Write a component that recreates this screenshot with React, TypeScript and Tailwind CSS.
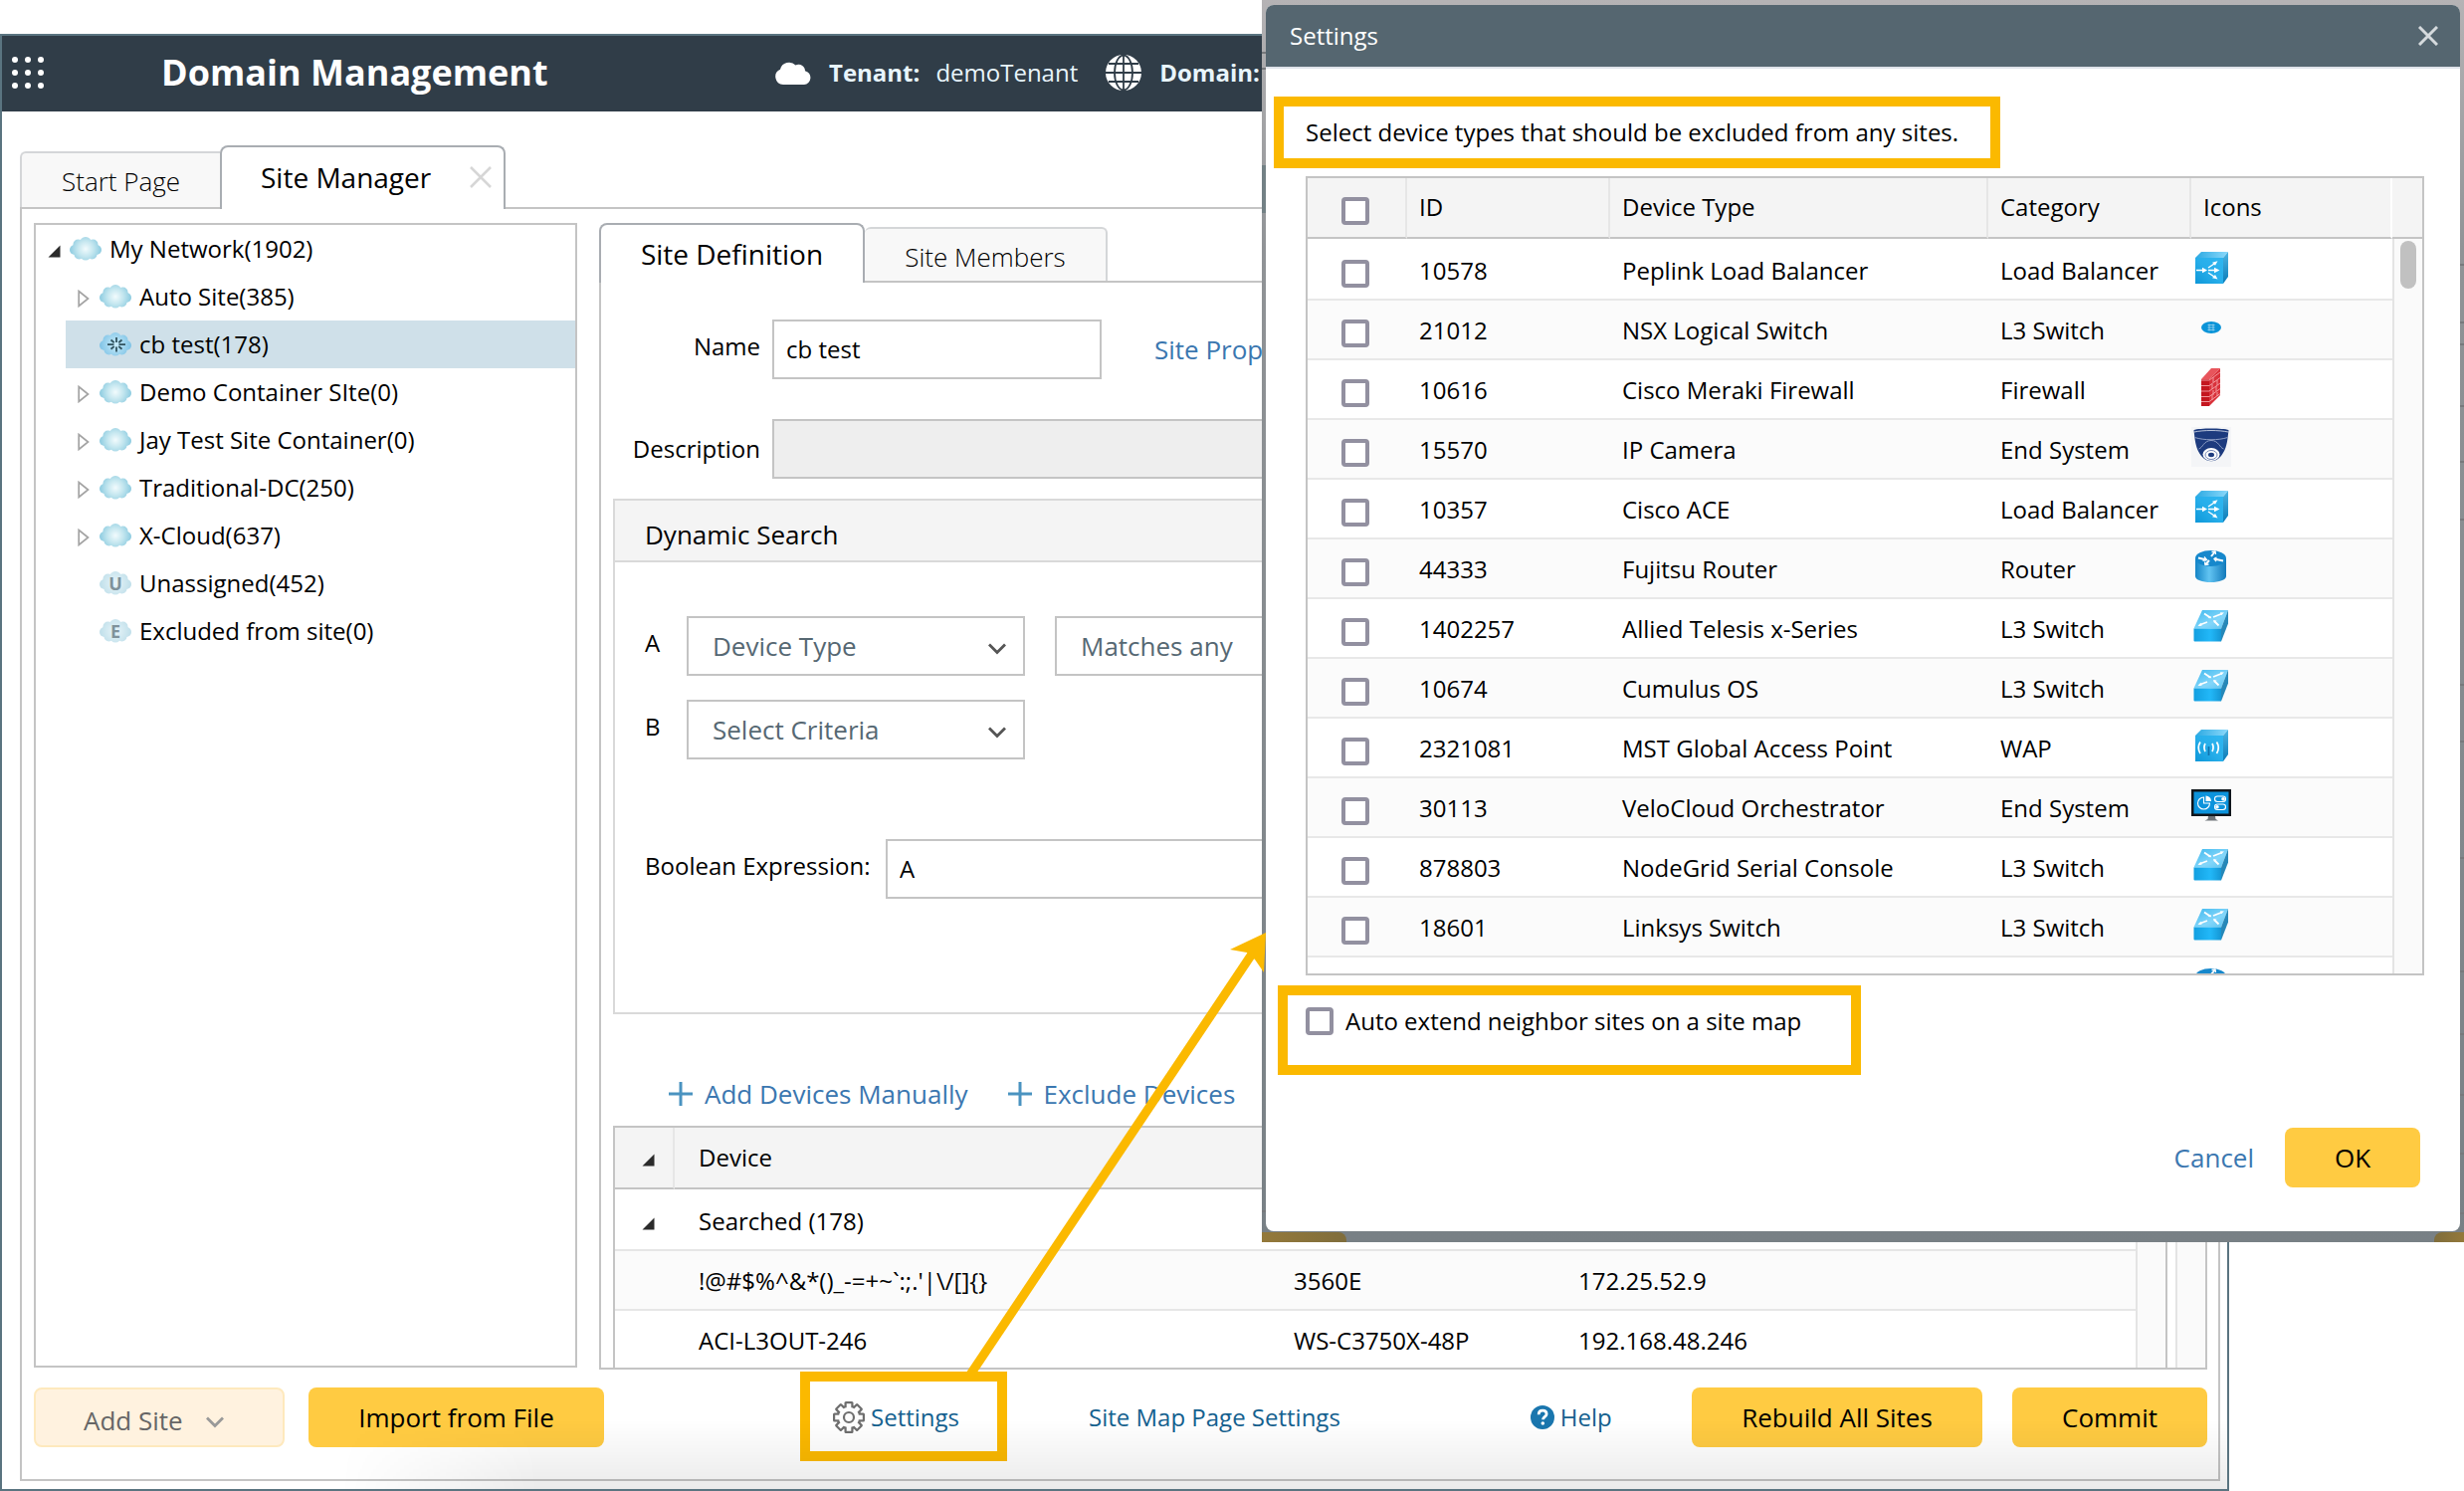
import React, { type ReactNode } from "react";

const siteTree = [
  { label: "Auto Site(385)", kind: "container" },
  { label: "cb test(178)", kind: "leaf", selected: true },
  { label: "Demo Container SIte(0)", kind: "container" },
  { label: "Jay Test Site Container(0)", kind: "container" },
  { label: "Traditional-DC(250)", kind: "container" },
  { label: "X-Cloud(637)", kind: "container" },
  { label: "Unassigned(452)", kind: "letter", letter: "U" },
  { label: "Excluded from site(0)", kind: "letter", letter: "E" },
];

const deviceTypes = [
  { id: "10578", type: "Peplink Load Balancer", category: "Load Balancer", icon: "balancer" },
  { id: "21012", type: "NSX Logical Switch", category: "L3 Switch", icon: "nsx" },
  { id: "10616", type: "Cisco Meraki Firewall", category: "Firewall", icon: "firewall" },
  { id: "15570", type: "IP Camera", category: "End System", icon: "camera" },
  { id: "10357", type: "Cisco ACE", category: "Load Balancer", icon: "balancer" },
  { id: "44333", type: "Fujitsu Router", category: "Router", icon: "router" },
  { id: "1402257", type: "Allied Telesis x-Series", category: "L3 Switch", icon: "switch" },
  { id: "10674", type: "Cumulus OS", category: "L3 Switch", icon: "switch" },
  { id: "2321081", type: "MST Global Access Point", category: "WAP", icon: "wap" },
  { id: "30113", type: "VeloCloud Orchestrator", category: "End System", icon: "monitor" },
  { id: "878803", type: "NodeGrid Serial Console", category: "L3 Switch", icon: "switch" },
  { id: "18601", type: "Linksys Switch", category: "L3 Switch", icon: "switch" },
  { id: "", type: "", category: "", icon: "router" },
];

/* ---------- icons ---------- */

function Defs() {
  return (
    <svg className="absolute size-0" aria-hidden="true">
      <defs>
        <radialGradient id="cloudFill" gradientUnits="userSpaceOnUse" cx="16" cy="12" r="16">
          <stop offset="0" stopColor="#f2fbfd" />
          <stop offset="0.5" stopColor="#c3e6ef" />
          <stop offset="1" stopColor="#8ccbe0" />
        </radialGradient>
        <radialGradient id="cloudBlue" gradientUnits="userSpaceOnUse" cx="16" cy="12" r="16">
          <stop offset="0" stopColor="#c9ecfa" />
          <stop offset="1" stopColor="#7fc3e6" />
        </radialGradient>
        <radialGradient id="cloudPale" gradientUnits="userSpaceOnUse" cx="16" cy="12" r="16">
          <stop offset="0" stopColor="#e9f5f9" />
          <stop offset="1" stopColor="#bfdfea" />
        </radialGradient>
        <linearGradient id="face" x1="0" y1="1" x2="1" y2="0">
          <stop offset="0" stopColor="#0d97d8" />
          <stop offset="0.5" stopColor="#27aeea" />
          <stop offset="1" stopColor="#2fb6f0" />
        </linearGradient>
        <linearGradient id="topFace" x1="0" y1="0" x2="1" y2="0">
          <stop offset="0" stopColor="#2ca9e2" />
          <stop offset="1" stopColor="#8bd9fb" />
        </linearGradient>
        <linearGradient id="sideFace" x1="0" y1="0" x2="0" y2="1">
          <stop offset="0" stopColor="#4cb4e2" />
          <stop offset="1" stopColor="#0b7cb8" />
        </linearGradient>
        <linearGradient id="switchTop" x1="0" y1="0" x2="1" y2="1">
          <stop offset="0" stopColor="#3fb8ee" />
          <stop offset="0.6" stopColor="#83d6fa" />
          <stop offset="1" stopColor="#59c3f0" />
        </linearGradient>
        <linearGradient id="switchFront" x1="0" y1="0" x2="1" y2="0">
          <stop offset="0" stopColor="#129fe0" />
          <stop offset="0.6" stopColor="#22b8f8" />
          <stop offset="1" stopColor="#1596d4" />
        </linearGradient>
        <linearGradient id="drum" x1="0" y1="0" x2="1" y2="0">
          <stop offset="0" stopColor="#1484c6" />
          <stop offset="0.45" stopColor="#62c4f2" />
          <stop offset="1" stopColor="#1279ba" />
        </linearGradient>
      </defs>
    </svg>
  );
}

function CloudIcon({ fill, children }: { fill: string; children?: ReactNode }) {
  return (
    <svg width="32" height="24" viewBox="0 0 32 24" className="shrink-0" aria-hidden="true">
      <g fill={fill}>
        <ellipse cx="16" cy="12" rx="13" ry="9" />
        <circle cx="16" cy="6" r="6" />
        <circle cx="8.5" cy="7.5" r="5" />
        <circle cx="23.5" cy="7.5" r="5" />
        <circle cx="5" cy="13" r="5" />
        <circle cx="27" cy="13" r="5" />
        <circle cx="9.5" cy="17.5" r="5" />
        <circle cx="22.5" cy="17.5" r="5" />
        <circle cx="16" cy="18" r="5.5" />
      </g>
      {children}
    </svg>
  );
}

function SiteIcon({ kind, letter }: { kind: string; letter?: string }) {
  if (kind === "leaf") {
    return (
      <CloudIcon fill="url(#cloudBlue)">
        <path
          d="M17 5v5M17 14.500v5M8 12.200h6.500M19.500 12.200H26M11.500 7.500l3.200 2.800M19.300 14l3.200 2.800M22.500 7.500l-3.200 2.800M14.700 14l-3.200 2.800"
          stroke="#31535f"
          strokeWidth="1.8"
          fill="none"
        />
      </CloudIcon>
    );
  }
  if (kind === "letter") {
    return (
      <CloudIcon fill="url(#cloudPale)">
        <text x="16" y="19" textAnchor="middle" fontSize="18" fontFamily="Open Sans, sans-serif" fontWeight="700" fill="#7f929b">
          {letter}
        </text>
      </CloudIcon>
    );
  }
  return <CloudIcon fill="url(#cloudFill)" />;
}

function ExpandedArrow() {
  return (
    <svg width="13" height="13" viewBox="0 0 13 13" className="shrink-0" aria-hidden="true">
      <path d="M12.500 .5v12H.5z" fill="#2b2b2b" />
    </svg>
  );
}

function CollapsedArrow() {
  return (
    <svg width="12" height="18" viewBox="0 0 12 18" className="shrink-0" aria-hidden="true">
      <path d="M1.200 1.500v15L10.500 9z" fill="#fff" stroke="#a3a3a3" strokeWidth="1.7" />
    </svg>
  );
}

function Chevron({ color }: { color: string }) {
  return (
    <svg width="20" height="12" viewBox="0 0 20 12" className="pointer-events-none shrink-0" aria-hidden="true">
      <path d="M2 1.500l8 8 8-8" fill="none" stroke={color} strokeWidth="2.8" />
    </svg>
  );
}

function PlusIcon() {
  return (
    <svg width="24" height="24" viewBox="0 0 24 24" aria-hidden="true">
      <path d="M12 0v24M0 12h24" stroke="#4a93c0" strokeWidth="3" />
    </svg>
  );
}

function GearIcon() {
  const teeth = [0, 45, 90, 135, 180, 225, 270, 315];
  return (
    <svg width="32" height="32" viewBox="0 0 32 32" aria-hidden="true">
      <g fill="#6e6e6e">
        {teeth.map((a) => (
          <rect key={a} x="11.500" y="0" width="9" height="8" rx="1.5" transform={`rotate(${a} 16 16)`} />
        ))}
        <circle cx="16" cy="16" r="12.5" />
      </g>
      <g fill="#fdfdfd">
        {teeth.map((a) => (
          <rect key={a} x="13.7" y="2.200" width="4.6" height="8" transform={`rotate(${a} 16 16)`} />
        ))}
        <circle cx="16" cy="16" r="10.2" />
      </g>
      <circle cx="16" cy="16" r="5" fill="none" stroke="#6e6e6e" strokeWidth="2.2" />
    </svg>
  );
}

function HelpIcon() {
  return (
    <svg width="24" height="24" viewBox="0 0 24 24" aria-hidden="true">
      <circle cx="12" cy="12" r="12" fill="#1a76ae" />
      <path d="M8.200 9.200c0-2.500 1.700-4 4-4s3.900 1.400 3.900 3.500c0 2.600-3.600 2.900-3.600 5.600" fill="none" stroke="#fff" strokeWidth="2.8" />
      <circle cx="12.3" cy="18" r="1.8" fill="#fff" />
    </svg>
  );
}

function TenantCloud() {
  return (
    <svg width="36" height="24" viewBox="0 0 36 24" aria-hidden="true">
      <path
        d="M8 24a8 8 0 0 1-3-15.300A9.200 9.200 0 0 1 20.500 4.500 6.500 6.500 0 0 1 30 10.200 7 7 0 0 1 29 24z"
        fill="#fff"
      />
    </svg>
  );
}

function Globe() {
  return (
    <svg width="36" height="36" viewBox="0 0 36 36" aria-hidden="true">
      <circle cx="18" cy="18" r="18" fill="#fff" />
      <g fill="none" stroke="#303d48" strokeWidth="1.8">
        <path d="M18 0v36M0 18h36M3 9h30M3 27h30" />
        <ellipse cx="18" cy="18" rx="9" ry="17.5" />
      </g>
    </svg>
  );
}

function Cube({ children }: { children: ReactNode }) {
  return (
    <>
      <path d="M4 10 10 4h27l-5 6z" fill="url(#topFace)" />
      <path d="M32 10l5-6v25l-5 7z" fill="url(#sideFace)" />
      <path d="M4 10h28v26H4z" fill="url(#face)" />
      {children}
    </>
  );
}

function DeviceIcon({ name }: { name: string }) {
  return (
    <svg width="40" height="40" viewBox="0 0 40 40" className="block" aria-hidden="true">
      {name === "balancer" && (
        <Cube>
          <g stroke="#fff" strokeWidth="1.4" fill="#fff">
            <path d="M5 22.500h7M17 22.500h8M17 20l6-4M17 25l6 4" />
            <path stroke="none" d="M11 19.700l5 2.800-5 2.800zM23 19.700l5.500 2.800-5.500 2.800zM21 14.700l5.500-1.500-2.500 4.600zM21 30.300l5.500 1.300-2.500-4.600z" />
          </g>
        </Cube>
      )}
      {name === "wap" && (
        <Cube>
          <g stroke="#fff" strokeWidth="1.7" fill="none">
            <path d="M9 16.500c-2.200 3.500-2.200 8 0 11.500M14 18c-1.300 2.500-1.300 5.500 0 8M21 18c1.300 2.500 1.300 5.500 0 8M25.500 16.500c2.200 3.500 2.200 8 0 11.500" />
            <path d="M17.500 21v9" stroke="#1272ad" />
          </g>
        </Cube>
      )}
      {name === "nsx" && (
        <>
          <ellipse cx="20" cy="20" rx="10" ry="6" fill="#0b94d8" />
          <path d="M16.500 17.500h7M16.500 20h7M16.500 22.500h7M18 16.500v7M22 16.500v7" stroke="#9fd6f0" strokeWidth=".8" />
        </>
      )}
      {name === "firewall" && (
        <>
          <path d="M10 12 20 1h9l-11 11z" fill="#e8555c" />
          <path d="M10 12h8v27h-8z" fill="#c4161f" />
          <path d="M18 12 29 1v27L18 39z" fill="#d9323b" />
          <path
            d="M10 13h8M10 18.500h8M10 24h8M10 29.500h8M10 34.500h8M18 13 29 5M18 18.500 29 10.500M18 24l11-8M18 29.500l11-8M18 34.500l11-8M22 10v5M26 13v5M21 17v5M25 19v5M22 23v5M26 25v4M21 28v5"
            stroke="#f5a3a7"
            strokeWidth=".9"
            fill="none"
          />
        </>
      )}
      {name === "camera" && (
        <>
          <path d="M0 0h40v40H0z" fill="#f4f5f7" />
          <path d="M2.500 3C8 1 32 1 37.500 3l-.8 7c-1 8-2.700 14-6.700 19-5.500 7-14.500 7-20 0-4-5-5.700-11-6.700-19z" fill="#1d3b7e" />
          <path d="M3.500 10.500c9 3 24 3 33 0M7.500 22c4-1 5-8.500 12.500-8.500S28.500 21 32.500 22" fill="none" stroke="#8d9dc4" strokeWidth="1" />
          <path d="M3 5c9-2 25-2 34 0" fill="none" stroke="#dfe4f0" strokeWidth=".8" />
          <ellipse cx="20" cy="27.5" rx="8.5" ry="6.500" fill="#fff" />
          <ellipse cx="20" cy="28" rx="6" ry="4.5" fill="none" stroke="#7283b3" strokeWidth="1" />
          <ellipse cx="20" cy="28" rx="3" ry="2.2" fill="#1d3b7e" />
        </>
      )}
      {name === "router" && (
        <>
          <path d="M4 12v18c0 3.500 7 6 15.500 6S35 33.500 35 30V12z" fill="url(#drum)" />
          <ellipse cx="19.5" cy="12" rx="15.5" ry="8" fill="#1688cc" />
          <g stroke="#fff" strokeWidth="2" fill="none">
            <path d="M7 11.500l8 2M32 14.500l-9-2M20 10l4-5M18 14l-4 4.500" />
            <path d="M13 10.500l2.500 3-4 .8M25.500 11l-2.500 1.500 2 2.500M20.500 5.500l3.500-.5.500 3M13.500 15.500l.5 3 3.500-.5" strokeWidth="1.3" />
          </g>
        </>
      )}
      {name === "switch" && (
        <>
          <path d="M2.500 22.500 11 4h26l-7 18.500z" fill="url(#switchTop)" />
          <path d="M2.500 22.500H30V35.500H3.500q-1 0-1-1z" fill="url(#switchFront)" />
          <path d="M30 22.500 37 4v13.500l-7 18z" fill="#2788b8" />
          <g stroke="#fff" strokeWidth="1.8" fill="#fff">
            <path d="M13 7.500l6 4M22 11l9-3.500M8 19l8-3M23 15l4.500 4.500" />
            <path stroke="none" d="M29 6.300l4 .3-3 2.600zM9.500 16.800 6.500 20l4.200-.2zM22 14l3.600.8-2.600 2zM16.500 12l3.800.3-1-2.400z" />
          </g>
        </>
      )}
      {name === "monitor" && (
        <>
          <path d="M0 4h40v27H0z" fill="#10161c" />
          <path d="M2.500 6.500h35v22h-35z" fill="#0c93dc" />
          <path d="M17 31h7l.5 3 2.500 1.500H13.500L16.500 34z" fill="#6e7479" />
          <g fill="none" stroke="#fff" strokeWidth="1.1">
            <path d="M12.500 12a6 6 0 1 0 6 6h-6z" />
            <rect x="23.5" y="11" width="11" height="5.5" rx="2.7" />
            <rect x="23.5" y="19" width="11" height="5.5" rx="2.7" />
          </g>
          <path d="M14.500 10.500a5.500 5.500 0 0 1 5.500 5.500h-5.500z" fill="#fff" />
          <circle cx="32" cy="13.7" r="1.8" fill="#fff" />
          <circle cx="26" cy="21.7" r="1.8" fill="#fff" />
        </>
      )}
    </svg>
  );
}

/* ---------- shared controls ---------- */

const yellowButton =
  "h-[60px] rounded-lg bg-[#ffcb42] text-[26px] leading-9 text-black whitespace-nowrap";

function Checkbox({ id, label }: { id: string; label?: string }) {
  return (
    <input
      id={id}
      type="checkbox"
      aria-label={label}
      className="block size-7 shrink-0 appearance-none rounded border-4 border-[#9290a0] bg-white checked:bg-[#9290a0]"
    />
  );
}

function Dropdown({ label, value }: { label: string; value: string }) {
  return (
    <div className="relative flex w-[340px] items-center">
      <select
        aria-label={label}
        className="h-[60px] w-full appearance-none border-2 border-[#c4c4c4] bg-white pl-6 text-[26px] text-[#566873]"
      >
        <option>{value}</option>
      </select>
      <span className="pointer-events-none absolute right-[18px] pt-1.5">
        <Chevron color="#555" />
      </span>
    </div>
  );
}

function Highlight({ className }: { className: string }) {
  return <span aria-hidden="true" className={`pointer-events-none absolute border-10 border-[#fbb900] ${className}`} />;
}

/* ---------- page parts ---------- */

function AppHeader() {
  return (
    <header className="flex h-[76px] shrink-0 items-center bg-[#303d48] pb-0.5 pl-2.5 text-[#e8f5fc]">
      <button aria-label="Applications" className="mr-[118px]">
        <svg width="32" height="32" viewBox="0 0 32 32" aria-hidden="true">
          {[3, 16, 29].map((y) => [3, 16, 29].map((x) => <circle key={`${x}-${y}`} cx={x} cy={y} r="3" fill="#fff" />))}
        </svg>
      </button>
      <h1 className="w-[617px] shrink-0 text-4xl font-bold text-white">Domain Management</h1>
      <TenantCloud />
      <span className="ml-[18px] font-bold">Tenant:</span>
      <span className="ml-4">demoTenant</span>
      <span className="ml-7">
        <Globe />
      </span>
      <span className="ml-[18px] font-bold">Domain:</span>
    </header>
  );
}

function PageTabs() {
  return (
    <div role="tablist" className="flex h-24 shrink-0 items-end">
      <button
        role="tab"
        className="h-14 w-[201px] rounded-tl-md border-t-2 border-l-2 border-[#d4d6d8] bg-[#f8f8f8] pt-0.5 text-[26px] font-light"
      >
        Start Page
      </button>
      <div className="relative -mb-0.5 flex h-16 w-[287px] items-center rounded-t-lg border-2 border-b-0 border-[#a9adb2] bg-white pb-0.5 pl-[39px]">
        <button role="tab" aria-selected="true" className="text-[28px]">
          Site Manager
        </button>
        <button aria-label="Close tab" className="ml-auto pr-3">
          <svg width="22" height="22" viewBox="0 0 22 22" aria-hidden="true">
            <path d="M1 1l20 20M21 1L1 21" stroke="#d6d6d6" strokeWidth="2.5" />
          </svg>
        </button>
      </div>
    </div>
  );
}

function SiteTree() {
  return (
    <nav aria-label="Sites" className="mb-0.5 w-[546px] shrink-0 border-2 border-[#c4c4c4] bg-white">
      <div className="flex h-12 items-center pl-3">
        <span className="pt-1">
          <ExpandedArrow />
        </span>
        <span className="mr-2 ml-[9px] flex">
          <CloudIcon fill="url(#cloudFill)" />
        </span>
        My Network(1902)
      </div>
      <ul className="pl-[30px]">
        {siteTree.map((site) => (
          <li key={site.label} className={`flex h-12 items-center pl-3 ${site.selected ? "bg-[#cfe0e9]" : ""}`}>
            <span className="mr-2.5 flex w-3 pt-1">{site.kind === "container" && <CollapsedArrow />}</span>
            <span className="mr-2 flex">
              <SiteIcon kind={site.kind} letter={site.letter} />
            </span>
            {site.label}
          </li>
        ))}
      </ul>
    </nav>
  );
}

function SiteForm() {
  return (
    <>
      <div className="flex items-center">
        <label htmlFor="site-name" className="mr-3 w-[148px] pb-1.5 text-right">
          Name
        </label>
        <input
          id="site-name"
          defaultValue="cb test"
          className="h-[60px] w-[331px] border-2 border-[#c4c4c4] px-3 pb-0.5"
        />
        <a href="#properties" className="ml-[53px] text-[26px] text-[#3b77b0]">
          Site Properties
        </a>
      </div>
      <div className="mt-10 flex items-center">
        <label htmlFor="site-description" className="mr-3 w-[148px] text-right">
          Description
        </label>
        <input
          id="site-description"
          disabled
          className="h-[60px] flex-1 border-2 border-[#c4c4c4] bg-[#eee] px-3"
        />
      </div>
    </>
  );
}

function DynamicSearch() {
  return (
    <section className="mt-5 border-2 border-[#d9d9d9]">
      <h2 className="flex h-[62px] items-center border-b-2 border-[#d9d9d9] bg-[#f4f4f4] pt-3 pb-1 pl-[30px] text-[26px]">
        Dynamic Search
      </h2>
      <div className="pt-[54px] pb-[114px] pl-[30px]">
        <div className="flex items-center">
          <span className="w-[42px] pb-1.5">A</span>
          <Dropdown label="Criteria A" value="Device Type" />
          <span className="ml-[30px]">
            <Dropdown label="Operator A" value="Matches any" />
          </span>
        </div>
        <div className="mt-6 flex items-center">
          <span className="w-[42px] pb-1.5">B</span>
          <Dropdown label="Criteria B" value="Select Criteria" />
        </div>
        <div className="mt-20 flex items-center pr-8">
          <label htmlFor="boolean" className="w-[242px] pb-1.5">
            Boolean Expression:
          </label>
          <input id="boolean" defaultValue="A" className="h-[60px] flex-1 border-2 border-[#c4c4c4] px-3 pb-0.5" />
        </div>
      </div>
    </section>
  );
}

function SearchedDevices() {
  const cell = "h-[60px] border-b-2 border-[#e6e6e6] pt-0.5 pl-[13px] text-left font-normal";
  return (
    <div className="flex h-0 grow overflow-hidden border-2 border-b-0 border-[#c4c4c4]">
      <table className="flex-1 table-fixed border-separate border-spacing-0 self-start">
        <colgroup>
          <col className="w-[60px]" />
          <col className="w-[609px]" />
          <col className="w-[286px]" />
          <col className="w-[286px]" />
          <col />
        </colgroup>
        <thead className="bg-[#f4f4f4]">
          <tr>
            <th className="h-[62px] border-r-2 border-b-2 border-r-[#e6e6e6] border-b-[#c4c4c4] pt-1 pl-[27px]">
              <ExpandedArrow />
            </th>
            <th colSpan={4} className="border-b-2 border-[#c4c4c4] pl-6 text-left font-normal">
              Device
            </th>
          </tr>
        </thead>
        <tbody>
          <tr>
            <td className="h-[62px] border-b-2 border-[#e6e6e6] pt-2 pl-[27px]">
              <ExpandedArrow />
            </td>
            <td colSpan={4} className="border-b-2 border-[#e6e6e6] pt-1 pl-6">
              Searched (178)
            </td>
          </tr>
          <tr className="bg-[#fbfbfb]">
            <td className={cell} />
            <td className="border-b-2 border-[#e6e6e6] pt-0.5 pl-6">{"!@#$%^&*()_-=+~`:;.'|\\/[]{}"}</td>
            <td className={cell}>3560E</td>
            <td className={cell}>172.25.52.9</td>
            <td className={cell} />
          </tr>
          <tr>
            <td className={cell} />
            <td className="border-b-2 border-[#e6e6e6] pt-0.5 pl-6">ACI-L3OUT-246</td>
            <td className={cell}>WS-C3750X-48P</td>
            <td className={cell}>192.168.48.246</td>
            <td className={cell} />
          </tr>
        </tbody>
      </table>
      <div className="w-[30px] shrink-0 border-l-2 border-[#e4e4e4] bg-[#fafafa]" />
    </div>
  );
}

function SiteDetail() {
  return (
    <div className="ml-[22px] flex min-w-0 flex-1 flex-col">
      <div role="tablist" className="flex h-[58px] items-end">
        <button
          role="tab"
          aria-selected="true"
          className="relative -mb-0.5 h-[60px] w-[267px] rounded-t-lg border-2 border-b-0 border-[#a9adb2] bg-white text-[28px]"
        >
          Site Definition
        </button>
        <button
          role="tab"
          className="h-[54px] w-[244px] rounded-t-md border-t-2 border-r-2 border-[#d4d6d8] bg-[#f8f8f8] pt-1 text-[26px] font-light"
        >
          Site Members
        </button>
      </div>
      <div className="flex min-h-0 flex-1 border-2 border-[#c4c4c4]">
        <div className="flex min-w-0 flex-1 flex-col pt-[37px] pr-2 pl-3">
          <SiteForm />
          <DynamicSearch />
          <div className="mt-[62px] mb-3.5 flex gap-10 pl-14 text-[26px] leading-9 text-[#3b77b0]">
            <button className="flex items-center gap-3">
              <PlusIcon />
              Add Devices Manually
            </button>
            <button className="flex items-center gap-3">
              <PlusIcon />
              Exclude Devices
            </button>
          </div>
          <SearchedDevices />
        </div>
        <div className="w-[30px] shrink-0 border-l-2 border-[#e4e4e4] bg-[#fafafa]" />
      </div>
    </div>
  );
}

function FooterBar() {
  return (
    <footer className="mt-[18px] flex shrink-0 items-center text-[#15618f]">
      <button
        disabled
        className="flex h-[60px] w-[252px] items-center rounded-lg border-2 border-[#fee9bd] bg-[#fff2df] pt-1.5 pl-12 text-[26px] text-[#666]"
      >
        Add Site
        <span className="ml-[22px] pt-1">
          <Chevron color="#999" />
        </span>
      </button>
      <button className={`${yellowButton} ml-6 w-[297px]`}>Import from File</button>
      <a href="#settings" className="relative ml-[230px] flex h-[60px] items-center gap-1.5">
        <GearIcon />
        Settings
        <Highlight className="-top-4 -right-12 -bottom-3.5 -left-[33px]" />
      </a>
      <a href="#site-map" className="ml-[130px]">
        Site Map Page Settings
      </a>
      <a href="#help" className="ml-[191px] flex items-center gap-1.5">
        <HelpIcon />
        Help
      </a>
      <button className={`${yellowButton} ml-auto w-[292px]`}>Rebuild All Sites</button>
      <button className={`${yellowButton} ml-[30px] w-[196px]`}>Commit</button>
    </footer>
  );
}

function DeviceTypeTable() {
  const head = "h-[61px] border-r-2 border-b-2 border-r-[#e6e6e6] border-b-[#c4c4c4] pb-0.5 pl-3 text-left font-normal";
  return (
    <div className="relative mt-[26px] flex h-[803px] overflow-hidden border-2 border-[#c4c4c4]">
      <table className="min-w-0 flex-1 table-fixed border-separate border-spacing-0 self-start">
        <colgroup>
          <col className="w-[100px]" />
          <col className="w-[204px]" />
          <col className="w-[380px]" />
          <col className="w-[204px]" />
          <col />
        </colgroup>
        <thead className="bg-[#f4f4f4]">
          <tr>
            <th className={`${head} pt-2`}>
              <span className="block pl-[22px]">
                <Checkbox id="all" label="Select all" />
              </span>
            </th>
            <th className={head}>ID</th>
            <th className={head}>Device Type</th>
            <th className={head}>Category</th>
            <th className={`${head} border-r-white`}>Icons</th>
          </tr>
        </thead>
        <tbody>
          {deviceTypes.map((d, i) => {
            const cell = `border-b-2 border-[#e8e8e8] ${i === 0 ? "h-[62px] border-t-2 border-t-white" : "h-[60px]"}`;
            return (
              <tr key={i} className={i % 2 ? "bg-[#fbfbfb]" : "bg-white"}>
                <td className={`${cell} pt-2 pl-[34px]`}>
                  {d.id && <Checkbox id={`type-${d.id}`} label={`Select ${d.type}`} />}
                </td>
                <td className={`${cell} pt-0.5 pl-3`}>{d.id}</td>
                <td className={`${cell} pt-0.5 pl-3`}>{d.type}</td>
                <td className={`${cell} pt-0.5 pl-3`}>{d.category}</td>
                <td className={`${cell} pb-1`}>
                  <DeviceIcon name={d.icon} />
                </td>
              </tr>
            );
          })}
        </tbody>
      </table>
      <div className="flex w-[30px] shrink-0 flex-col">
        <div className="h-[61px] border-b-2 border-[#c4c4c4] bg-[#f4f4f4]" />
        <div className="flex flex-1 justify-center border-l-2 border-[#e4e4e4] bg-[#fafafa] pt-0.5">
          <div className="h-12 w-4 rounded-full bg-[#c1c1c1]" />
        </div>
      </div>
    </div>
  );
}

function SettingsDialog() {
  return (
    <div className="absolute top-0 right-0 left-[1268px] bg-linear-to-b from-[#b5b3b5] via-[#909396] via-20% to-[#788085] px-1 pt-[5px] pb-[11px]">
      <svg width="4" height="1248" className="absolute top-0 right-0" aria-hidden="true">
        {[266, 324, 346, 408, 464, 522, 688, 745, 862, 976, 1039, 1100, 1159, 1219].map((y) => (
          <path key={y} d={`M0 ${y}h4`} stroke="#77797c" strokeWidth="2" />
        ))}
      </svg>
      <svg width="4" height="1248" className="absolute top-0 left-0" aria-hidden="true">
        <path d="M0 53h4M0 69h4M0 1217h4" stroke="#77797c" strokeWidth="2" />
        <path d="M0 166h4v48H0z" fill="#738185" />
      </svg>
      <span className="absolute bottom-0 left-0 h-2.5 w-[85px] rounded-tr-lg bg-linear-to-r from-[#94793a] to-[#7f6d3c]" />
      <span className="absolute right-0 bottom-0 h-2.5 w-[30px] rounded-tl-lg bg-linear-to-r from-[#7f6d3c] to-[#94793a]" />
      <section role="dialog" aria-label="Settings" className="relative rounded-lg bg-white">
        <header className="flex h-16 items-center justify-between rounded-t-lg border-b-2 border-[#dfe3ea] bg-[#556670] pr-[22px] pl-6 text-white">
          <h2>Settings</h2>
          <button aria-label="Close">
            <svg width="20" height="20" viewBox="0 0 20 20" aria-hidden="true">
              <path d="M1 1l18 18M19 1L1 19" stroke="#d5dadd" strokeWidth="3" />
            </svg>
          </button>
        </header>
        <div className="pt-[46px] pr-9 pb-11 pl-10">
          <div className="flex">
            <p className="relative leading-9">
              Select device types that should be excluded from any sites.
              <Highlight className="-top-[18px] -right-[42px] -bottom-[18px] -left-8" />
            </p>
          </div>
          <DeviceTypeTable />
          <div className="mt-8 flex">
            <div className="relative flex h-7 items-center gap-3">
              <Checkbox id="auto-extend" />
              <label htmlFor="auto-extend">Auto extend neighbor sites on a site map</label>
              <Highlight className="-top-[22px] -right-[60px] -bottom-10 -left-7" />
            </div>
          </div>
          <div className="mt-[93px] flex items-center justify-end gap-[31px] pr-1">
            <button className="text-[26px] text-[#3b77b0]">Cancel</button>
            <button className={`${yellowButton} w-[136px]`}>OK</button>
          </div>
        </div>
      </section>
    </div>
  );
}

export default function App() {
  return (
    <div className="relative flex min-h-screen flex-col overflow-hidden bg-white pt-[34px] font-['Open_Sans',sans-serif] text-2xl leading-8 text-black">
      <Defs />
      <div className="relative mr-[236px] flex flex-1 flex-col border-2 border-[#5a7480]">
        <AppHeader />
        <main className="mr-[7px] mb-2 ml-[18px] flex flex-1 flex-col">
          <PageTabs />
          <div className="flex flex-1 flex-col border-2 border-[#c4c4c4] pt-3.5 pr-[11px] pb-8 pl-3">
            <div className="flex flex-1">
              <SiteTree />
              <SiteDetail />
            </div>
            <FooterBar />
          </div>
        </main>
        <div className="pointer-events-none absolute right-0 bottom-0 left-[340px] h-[70px] bg-linear-to-t from-black/8 to-transparent [mask-image:linear-gradient(to_right,transparent,black_200px)]" />
      </div>
      <SettingsDialog />
      <svg width="320" height="470" viewBox="960 930 320 470" className="pointer-events-none absolute top-[930px] left-[960px]" aria-hidden="true">
        <path d="M973 1384 1259 957" stroke="#fbb900" strokeWidth="9" />
        <path d="M1272 937 1236 954l17 3 8 7 9 13z" fill="#fbb900" />
      </svg>
    </div>
  );
}
